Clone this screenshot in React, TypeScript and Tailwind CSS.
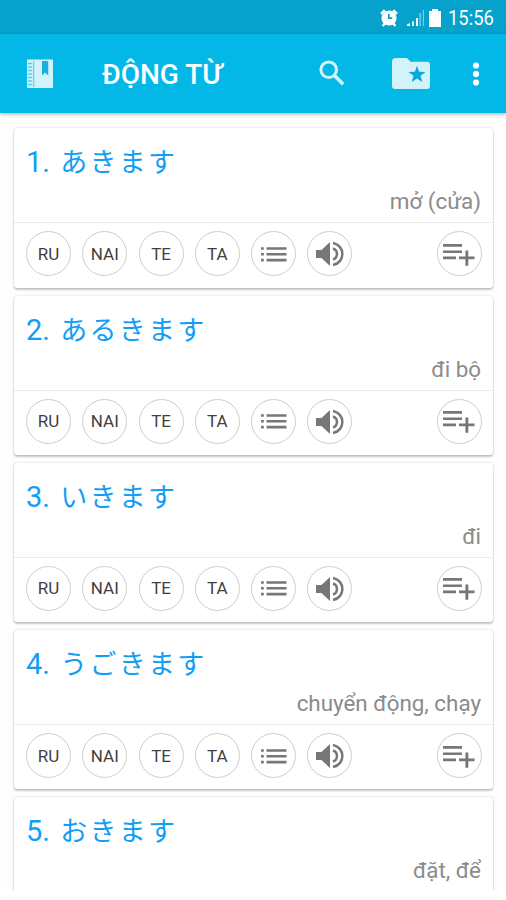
import type { ReactNode } from 'react';

type Verb = {
  id: number;
  kana: string;
  meaning: string;
};

const verbs: Verb[] = [
  { id: 1, kana: 'あきます', meaning: 'mở (cửa)' },
  { id: 2, kana: 'あるきます', meaning: 'đi bộ' },
  { id: 3, kana: 'いきます', meaning: 'đi' },
  { id: 4, kana: 'うごきます', meaning: 'chuyển động, chạy' },
  { id: 5, kana: 'おきます', meaning: 'đặt, để' },
];

const StatusBar = () => (
  <div className="flex h-[34px] shrink-0 items-center justify-end bg-[#06a2cc] pt-px pr-3 text-white">
    {/* Alarm */}
    <svg className="mr-2 h-[18px] w-[18px]" viewBox="0 0 18 18" fill="none">
      <circle cx="9" cy="9" r="7.6" fill="#fff" />
      <path d="M1 4.8 4.8 1.2M17 4.8 13.2 1.2M2.6 16.8l2.4-2.4M15.4 16.8l-2.4-2.4" stroke="#fff" strokeWidth="2.4" />
      <path d="M8.8 5v4.200h3.400" stroke="#06a2cc" strokeWidth="1.7" />
    </svg>
    {/* Signal */}
    <svg className="mr-[5px] h-[18px] w-[18px]" viewBox="0 0 18 18" fill="#fff">
      <path d="M1 17v-1.500L4 14v3zM6 12.500h2V17H6zM10 9h2v8h-2z" opacity=".95" />
      <path d="M13.500 4h1.200v13h-1.200zM16.800 1h1v16h-1z" opacity=".55" />
    </svg>
    {/* Battery */}
    <svg className="mr-[7px] h-[18px] w-3" viewBox="0 0 12 18" fill="#fff">
      <path d="M3 0h6v2h3v16H0V2h3z" />
    </svg>
    <span className="w-[46px] text-[20px] leading-none whitespace-nowrap">
      <span className="inline-block origin-left scale-x-[0.92]">15:56</span>
    </span>
  </div>
);

const Header = () => (
  <header className="z-10 flex h-[79px] shrink-0 items-center bg-[#03b8e7] pr-[26px] pl-[27px] text-white shadow-[0_1px_4px_rgba(0,0,0,0.35)]">
    {/* Notebook */}
    <svg className="mt-px h-[30px] w-[26px]" viewBox="0 0 26 30">
      <path d="M0 .5h26v28.500H0z" fill="#d3f3fb" />
      <path d="M6.600 2v26" stroke="#69d4ef" strokeWidth="1.400" />
      <path d="M1 4.500h4M1 8h4M1 11.500h4M1 15h4M1 18.500h4M1 22h4M1 25.500h4" stroke="#55cced" strokeWidth="1.400" />
      <path d="M15 2h6.200v14.500l-3.100-3-3.100 3z" fill="#18b0dc" />
    </svg>
    <h1 className="mt-0.5 ml-[49px] text-[28px] leading-none font-medium whitespace-nowrap">ĐỘNG TỪ</h1>
    <div className="ml-auto flex items-center">
      {/* Search */}
      <svg className="mb-0.5 h-[26px] w-[26px]" viewBox="0 0 26 26" fill="none" stroke="#d3f3fb" strokeWidth="3">
        <circle cx="9.700" cy="9.700" r="7.800" />
        <path d="m15.200 15.200 9 9" strokeWidth="3.600" />
      </svg>
      {/* Favourites folder */}
      <svg className="ml-[47px] h-[31px] w-[38px]" viewBox="0 0 38 31">
        <path d="M3.500 0H15l3.600 3.800H35a3 3 0 0 1 3 3V28a3 3 0 0 1-3 3H3a3 3 0 0 1-3-3V3.500A3.500 3.500 0 0 1 3.500 0z" fill="#d3f3fb" />
        <path d="m25 7.700 2.100 6 6.400.2-5 3.900 1.800 6.200-5.300-3.600-5.300 3.600 1.800-6.200-5-3.900 6.400-.2z" fill="#08a8d8" />
      </svg>
      <svg className="ml-[42px] h-6 w-2" viewBox="0 0 8 24" fill="#fff">
        <circle cx="4" cy="3.500" r="3.100" />
        <circle cx="4" cy="12" r="3.100" />
        <circle cx="4" cy="20.500" r="3.100" />
      </svg>
    </div>
  </header>
);

const RoundButton = ({ label, children }: { label: string; children: ReactNode }) => (
  <button
    aria-label={label}
    className="flex h-[45px] w-[45px] shrink-0 items-center justify-center rounded-full border border-[#cecece] bg-white pt-px text-[17px] leading-none text-[#3f3f3f]"
  >
    {children}
  </button>
);

const ListIcon = () => (
  <svg className="h-[15px] w-[26px]" viewBox="0 0 26 15" fill="#777">
    <path d="M0 .2h2.800v2.600H0zM5.500.2H25.500v2.600H5.500zM0 6h2.800v2.600H0zM5.500 6H25.500v2.600H5.500zM0 11.800h2.800v2.600H0zM5.500 11.800H25.500v2.600H5.500z" />
  </svg>
);

const SpeakerIcon = () => (
  <svg className="h-[26px] w-7" viewBox="0 0 28 26" fill="none" stroke="#777" strokeWidth="2.500">
    <path d="M0 9h5.500L14 1v24l-8.500-8H0z" fill="#777" stroke="none" />
    <path d="M17 7.500a5.800 5.800 0 0 1 0 11" />
    <path d="M17 2c12.500 2.500 12.500 19.500 0 22" />
  </svg>
);

const AddIcon = () => (
  <svg className="mt-px h-[22px] w-8" viewBox="0 0 32 22" fill="#777">
    <path d="M0 0h19v2.700H0zM0 6.400h19v2.700H0zM0 12.600h13v2.700H0zM16 12.600h15.500v2.700H16zM22.400 6.400h2.900v15.400h-2.900z" />
  </svg>
);

const VerbActions = () => (
  <div className="flex items-center gap-[11.300px] pt-2 pr-[11.500px] pl-3">
    <RoundButton label="RU">RU</RoundButton>
    <RoundButton label="NAI">NAI</RoundButton>
    <RoundButton label="TE">TE</RoundButton>
    <RoundButton label="TA">TA</RoundButton>
    <RoundButton label="Forms">
      <ListIcon />
    </RoundButton>
    <RoundButton label="Listen">
      <SpeakerIcon />
    </RoundButton>
    <div className="ml-auto">
      <RoundButton label="Add">
        <AddIcon />
      </RoundButton>
    </div>
  </div>
);

const VerbCard = ({ verb, showActions }: { verb: Verb; showActions: boolean }) => (
  <article className="h-[159.300px] shrink-0 rounded-[3px] bg-white shadow-[0_0_2px_rgba(0,0,0,0.22),0_2px_2px_rgba(0,0,0,0.2)]">
    <div className="flex h-[95px] flex-col justify-between border-b border-[#ececec] px-3 pt-[15px] pb-2">
      <h2 className="text-[29px] leading-[38px] whitespace-nowrap text-[#129ef5]">
        {verb.id}. <span className="ml-[3px] text-[27px] tracking-[2.300px]">{verb.kana}</span>
      </h2>
      <p className="text-right text-[22.400px] leading-[26px] whitespace-nowrap text-[#8b8b8b]">{verb.meaning}</p>
    </div>
    {showActions && <VerbActions />}
  </article>
);

const App = () => (
  <div className="flex h-[900px] w-[506px] flex-col overflow-hidden bg-white font-['Roboto','Noto_Sans_CJK_JP',sans-serif]">
    <StatusBar />
    <Header />
    <main className="flex h-[777px] shrink-0 flex-col gap-2 overflow-hidden bg-[#fefefe] pt-[15.300px] pr-[13px] pl-[14px]">
      {verbs.map((verb) => (
        <VerbCard key={verb.id} verb={verb} showActions={verb.id < 5} />
      ))}
    </main>
  </div>
);

export default App;
